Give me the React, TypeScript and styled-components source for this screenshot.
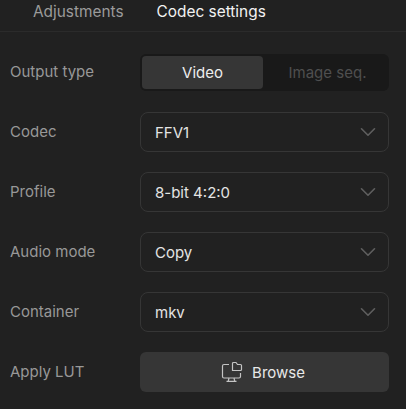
import React from 'react'
import styled, { createGlobalStyle } from 'styled-components'
import { ChevronDown } from 'lucide-react'

const GlobalStyle = createGlobalStyle`
  html, body {
    margin: 0;
    padding: 0;
    background: #212121;
    overflow: hidden;
  }
`

const Panel = styled.div`
  width: 406px;
  height: 409px;
  background: #212121;
  font-family: Inter, "Liberation Sans", sans-serif;
  font-size: 15px;
  overflow: hidden;
`

const Tabs = styled.div`
  display: flex;
  gap: 33px;
  height: 31px;
  padding-left: 33px;
  border-bottom: 1px solid #2b2b2b;
`

const Tab = styled.div<{ $active?: boolean }>`
  font-size: 15.4px;
  line-height: 24px;
  color: ${(p) => (p.$active ? '#f2f2f2' : '#9b9b9b')};
`

const Form = styled.div`
  display: flex;
  flex-direction: column;
  gap: 20px;
  padding: 20px 17px 0 10px;
`

const Row = styled.div`
  display: grid;
  grid-template-columns: 130px 249px;
  align-items: center;
  height: 40px;
`

const Label = styled.div`
  padding-bottom: 2px;
  color: #989898;
`

const Segmented = styled.div`
  display: grid;
  grid-template-columns: 121px 1fr;
  box-sizing: border-box;
  height: 37px;
  margin-top: 1px;
  padding: 2px;
  background: #191919;
  border-radius: 6px;
`

const Segment = styled.div<{ $active?: boolean }>`
  display: flex;
  align-items: center;
  justify-content: center;
  padding: ${(p) => (p.$active ? '0 0 1px' : '0 0 1px 5px')};
  border-radius: 4px;
  background: ${(p) => (p.$active ? '#363636' : 'transparent')};
  color: ${(p) => (p.$active ? '#ededed' : '#4f4f4f')};
`

const Select = styled.div`
  box-sizing: border-box;
  display: flex;
  align-items: center;
  justify-content: space-between;
  height: 40px;
  padding: 0 7px 0 14px;
  border: 1px solid #363636;
  border-radius: 8px;
  color: #e4e4e4;
  svg {
    color: #5f5f5f;
  }
`

const BrowseButton = styled.div`
  display: flex;
  align-items: center;
  justify-content: center;
  gap: 9px;
  height: 40px;
  padding-right: 3px;
  background: #363636;
  border-radius: 6px;
  color: #e8e8e8;
`

const BrowseIcon = () => (
  <svg width="22" height="22" viewBox="0 0 22 22" fill="none" stroke="#c4c4c4" strokeWidth="1.2">
    <path d="M8 3.5H3a1.5 1.5 0 0 0-1.5 1.5v10.5A1.5 1.5 0 0 0 3 17h15a1.5 1.5 0 0 0 1.5-1.5V12" />
    <path d="M11.5 9.5V2.5a1 1 0 0 1 1-1h2.5l1.5 2h3a1 1 0 0 1 1 1v4a1 1 0 0 1-1 1z" />
    <path d="M8 17l-.7 3M13 17l.7 3M5.5 20.4h10" />
  </svg>
)

const fields = [
  { label: 'Codec', value: 'FFV1' },
  { label: 'Profile', value: '8-bit 4:2:0' },
  { label: 'Audio mode', value: 'Copy' },
  { label: 'Container', value: 'mkv' },
]

export default function App() {
  return (
    <Panel>
      <GlobalStyle />
      <Tabs>
        <Tab>Adjustments</Tab>
        <Tab $active>Codec settings</Tab>
      </Tabs>
      <Form>
        <Row>
          <Label>Output type</Label>
          <Segmented>
            <Segment $active>Video</Segment>
            <Segment>Image seq.</Segment>
          </Segmented>
        </Row>
        {fields.map((f) => (
          <Row key={f.label}>
            <Label>{f.label}</Label>
            <Select>
              {f.value}
              <ChevronDown size={26} strokeWidth={1.5} />
            </Select>
          </Row>
        ))}
        <Row>
          <Label>Apply LUT</Label>
          <BrowseButton>
            <BrowseIcon />
            Browse
          </BrowseButton>
        </Row>
      </Form>
    </Panel>
  )
}
